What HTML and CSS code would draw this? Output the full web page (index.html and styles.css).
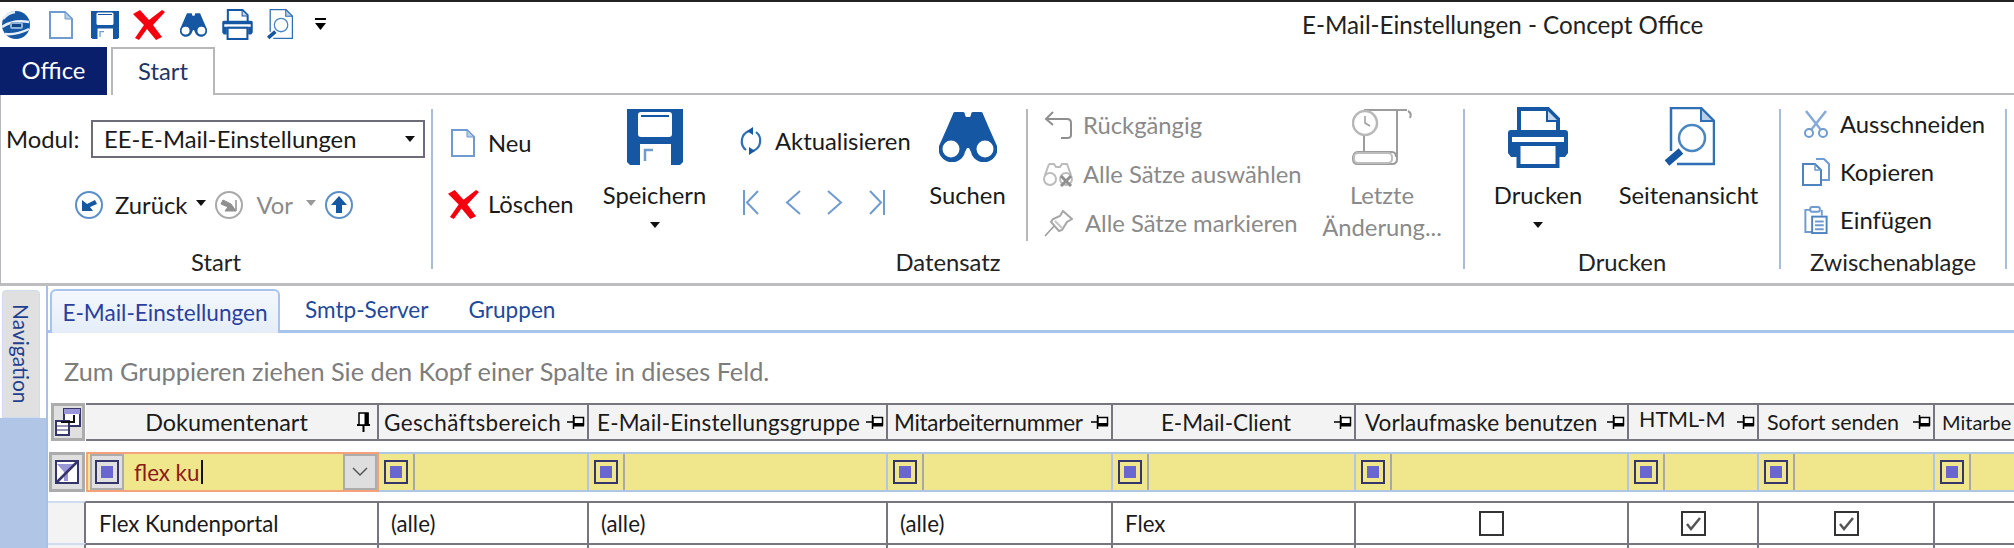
FILE: index.html
```html
<!DOCTYPE html>
<html lang="de">
<head>
<meta charset="utf-8">
<title>E-Mail-Einstellungen - Concept Office</title>
<link rel="stylesheet" href="styles.css">
</head>
<body>
<svg class="defs" width="0" height="0">
  <symbol id="doc" viewBox="0 0 24 28"><path d="M1 1H16L23 8V27H1Z" fill="#fff" stroke="#6f9bcf" stroke-width="2"/><path d="M16 1V8H23Z" fill="#b9cfe8" stroke="#6f9bcf"/></symbol>
  <symbol id="save" viewBox="0 0 56 56"><path d="M0 0H56V53L53 56H3L0 53Z" fill="#1657a3"/><rect x="11" y="3" width="34" height="25" rx="3" fill="#fff"/><rect x="14" y="6" width="28" height="2" fill="#1657a3"/><rect x="13" y="35" width="31" height="21" fill="#fff"/><path d="M18 52V41H26" fill="none" stroke="#6f9bcf" stroke-width="2.5"/></symbol>
  <symbol id="cross" viewBox="0 0 32 30"><path d="M0 4L7 0L16 10L29 0L32 2L20 15L29 27L23 30L14 19L6 30L2 28L11 15Z" fill="#f5000f"/></symbol>
  <symbol id="binoc" viewBox="0 0 58 50"><path d="M14 2Q14 0 16 0H24Q26 0 26 3L27 5H31L32 3Q32 0 34 0H42Q44 0 44 2L50 16L58 34A13 13 0 0 1 32 40L30 36H28L26 40A13 13 0 0 1 0 34L8 16Z" fill="#1657a3"/><circle cx="12" cy="37" r="8.500" fill="#fff"/><circle cx="46" cy="37" r="8.500" fill="#fff"/></symbol>
  <symbol id="printer" viewBox="0 0 60 61"><path d="M11 25V2H40L50 12V25" fill="#fff" stroke="#1657a3" stroke-width="4"/><path d="M39 3V14H50" fill="#c5d7ec" stroke="#1657a3" stroke-width="2"/><path d="M3 23H57Q60 23 60 26V46L57 50H51V36H9V50H3L0 46V26Q0 23 3 23Z" fill="#1657a3"/><rect x="4" y="30" width="52" height="5" fill="#fff"/><rect x="10.500" y="37" width="39" height="22" fill="#fff" stroke="#1657a3" stroke-width="4"/></symbol>
  <symbol id="preview" viewBox="0 0 52 60"><path d="M8 44V1H38L51 14V57H14" fill="#fff" stroke="#2f6fb5" stroke-width="2.500"/><path d="M38 1V14H51Z" fill="#b9cfe8" stroke="#2f6fb5" stroke-width="2"/><circle cx="29" cy="31" r="13" fill="#fff" stroke="#4a86c2" stroke-width="2.500"/><path d="M4 56L18 44" stroke="#1657a3" stroke-width="7"/></symbol>
  <symbol id="pin-side" viewBox="0 0 18 14"><path d="M0 7H6M6.500 0V14" stroke="#000" stroke-width="1.500" fill="none"/><path d="M7 2.500H16.500V10H7Z" fill="#fff" stroke="#000" stroke-width="1.500"/><path d="M7 8H17V11.500H7Z" fill="#000"/></symbol>
  <symbol id="pin-down" viewBox="0 0 15 20"><path d="M7.500 13V20M1 13H14" stroke="#000" stroke-width="2" fill="none"/><path d="M3 1H12V13H3Z" fill="#fff" stroke="#000" stroke-width="1.500"/><path d="M8.500 1H12.500V13H8.500Z" fill="#000"/></symbol>
  <symbol id="opsq" viewBox="0 0 24 24"><rect x="1" y="1" width="22" height="22" fill="none" stroke="#35356b" stroke-width="2"/><rect x="6" y="6" width="12" height="12" fill="#6a66cf"/></symbol>
  <symbol id="check" viewBox="0 0 25 25"><rect x="1" y="1" width="23" height="23" fill="#fff" stroke="#333" stroke-width="2"/><path d="M6 13L10 18L19 7" fill="none" stroke="#555" stroke-width="2.500"/></symbol>
  <symbol id="box" viewBox="0 0 25 25"><rect x="1" y="1" width="23" height="23" fill="#fff" stroke="#333" stroke-width="2"/></symbol>
</svg>

<header class="titlebar">
  <div class="qat">
    <svg class="qi logo" viewBox="0 0 28 28"><circle cx="14" cy="14" r="14" fill="#1657a3"/><path d="M1 8Q6 2 13 1M0 16Q11 8 27 11M3 23Q15 24 27 18" fill="none" stroke="#e6eff8" stroke-width="2.500"/><rect x="8" y="11" width="13" height="7" rx="2" fill="#8fb2d9"/><rect x="10" y="13" width="9" height="3" fill="#0f4586"/></svg>
    <svg class="qi q-doc"><use href="#doc"/></svg>
    <svg class="qi q-save"><use href="#save"/></svg>
    <svg class="qi q-cross"><use href="#cross"/></svg>
    <svg class="qi q-binoc"><use href="#binoc"/></svg>
    <svg class="qi q-printer"><use href="#printer"/></svg>
    <svg class="qi q-preview"><use href="#preview"/></svg>
    <svg class="qi q-more" viewBox="0 0 11 13"><rect width="11" height="2"/><path d="M0 5H11L5.500 12Z"/></svg>
  </div>
  <div class="title">E-Mail-Einstellungen - Concept Office</div>
</header>

<nav class="tabs">
  <div class="tab-office">Office</div>
  <div class="tab-start">Start</div>
  <div class="tabs-rest"></div>
</nav>

<section class="ribbon">
  <div class="group g-start">
    <div class="modul">
      <span class="modul-label">Modul:</span>
      <div class="combo"><span>EE-E-Mail-Einstellungen</span><i class="caret"></i></div>
    </div>
    <div class="histnav">
      <svg class="circ" viewBox="0 0 28 28"><circle cx="14" cy="14" r="13" fill="#fff" stroke="#5a8fc7" stroke-width="2"/><path d="M7 9V20H18L15 16L22 13L20 9L12 13Z" fill="#1657a3"/></svg>
      <span class="hist-t">Zurück</span><i class="caret hist-c"></i>
      <svg class="circ" viewBox="0 0 28 28"><circle cx="14" cy="14" r="13" fill="#fff" stroke="#a9a9a9" stroke-width="2"/><path d="M21 20V9L21 20H10L13 16L6 13L8 9L16 13Z" fill="#8f8f8f" stroke="#8f8f8f"/></svg>
      <span class="hist-t off vor">Vor</span><i class="caret off hist-c"></i>
      <svg class="circ" viewBox="0 0 28 28"><circle cx="14" cy="14" r="13" fill="#fff" stroke="#5a8fc7" stroke-width="2"/><path d="M14 5L22 14H17V22H11V14H6Z" fill="#1657a3"/></svg>
    </div>
    <div class="group-label">Start</div>
  </div>

  <div class="group g-data">
    <div class="group-body">
      <div class="stack s-neu">
        <div class="item"><span class="ic"><svg class="i-doc"><use href="#doc"/></svg></span><span>Neu</span></div>
        <div class="item"><span class="ic"><svg class="i-cross"><use href="#cross"/></svg></span><span>Löschen</span></div>
      </div>
      <div class="large l-save">
        <div class="large-ic"><svg class="i-save"><use href="#save"/></svg></div>
        <div class="large-t">Speichern</div>
        <i class="caret large-c"></i>
      </div>
      <div class="s-upd">
        <div class="item"><span class="ic-upd"><svg viewBox="0 0 24 32"><path d="M10 6A11 11 0 0 0 7 25M14 26A11 11 0 0 0 17 7" fill="none" stroke="#2f6fb5" stroke-width="2.200"/><path d="M14 2V10L8 6ZM10 22V30L16 26Z" fill="#1657a3"/></svg></span><span>Aktualisieren</span></div>
        <div class="recnav">
          <svg viewBox="0 0 16 25"><path d="M1 0V25M15 1L4 12.500L15 24" fill="none" stroke="#6f9bcf" stroke-width="2"/></svg>
          <svg viewBox="0 0 16 25"><path d="M15 1L2 12.500L15 24" fill="none" stroke="#6f9bcf" stroke-width="2"/></svg>
          <svg viewBox="0 0 16 25"><path d="M1 1L14 12.500L1 24" fill="none" stroke="#6f9bcf" stroke-width="2"/></svg>
          <svg viewBox="0 0 16 25"><path d="M15 0V25M1 1L12 12.500L1 24" fill="none" stroke="#6f9bcf" stroke-width="2"/></svg>
        </div>
      </div>
      <div class="large l-find">
        <div class="large-ic"><svg class="i-binoc"><use href="#binoc"/></svg></div>
        <div class="large-t">Suchen</div>
      </div>
      <div class="inner-sep"></div>
      <div class="stack s-dis off">
        <div class="item"><span class="ic"><svg class="i-undo" viewBox="0 0 28 28"><path d="M9 1L2 8L9 14M2 8H23Q27 8 27 12V24Q27 27 23 27H17" fill="none" stroke="#8f8f8f" stroke-width="2"/></svg></span><span>Rückgängig</span></div>
        <div class="item"><span class="ic"><svg class="i-all" viewBox="0 0 30 25"><path d="M6 2H11L13 5H17L19 2H24L28 13M6 2L2 13" fill="none" stroke="#bcbcbc" stroke-width="2"/><circle cx="7" cy="17" r="6" fill="#fff" stroke="#bcbcbc" stroke-width="2"/><circle cx="23" cy="17" r="6" fill="#fff" stroke="#bcbcbc" stroke-width="2"/><path d="M18 14L28 24M28 14L18 24" stroke="#8f8f8f" stroke-width="3"/></svg></span><span>Alle Sätze auswählen</span></div>
        <div class="item"><span class="ic"><svg class="i-pin" viewBox="0 0 29 27"><path d="M1 26L11 15" stroke="#9a9a9a" stroke-width="1.500"/><path d="M19 1L28 9L23 12L18 20L15 21L7 12L9 9L16 6Z" fill="#fff" stroke="#a6a6a6" stroke-width="2"/><path d="M11 11L18 18" stroke="#c5c5c5" stroke-width="2"/></svg></span><span class="mark-t">Alle Sätze markieren</span></div>
      </div>
      <div class="large l-last off">
        <div class="large-ic"><svg class="i-scroll" viewBox="0 0 60 56"><path d="M12 1H55M56 2Q60 4 58 9M45 2V50Q45 55 40 55H6Q1 55 1 50Q1 43 6 43H40Q44 43 44 48M12 26V43" fill="none" stroke="#9c9c9c" stroke-width="2"/><rect x="2" y="44" width="38" height="10" rx="4" fill="#fff" stroke="#bdbdbd" stroke-width="2"/><circle cx="13" cy="14" r="12" fill="#fff" stroke="#b8b8b8" stroke-width="2.500"/><path d="M13 7V14L18 17" fill="none" stroke="#9c9c9c" stroke-width="1.500"/></svg></div>
        <div class="large-t">Letzte<br>Änderung...</div>
      </div>
    </div>
    <div class="group-label">Datensatz</div>
  </div>

  <div class="group g-print">
    <div class="group-body">
      <div class="large l-print">
        <div class="large-ic"><svg class="i-printer"><use href="#printer"/></svg></div>
        <div class="large-t">Drucken</div>
        <i class="caret large-c"></i>
      </div>
      <div class="large l-prev">
        <div class="large-ic"><svg class="i-preview"><use href="#preview"/></svg></div>
        <div class="large-t">Seitenansicht</div>
      </div>
    </div>
    <div class="group-label">Drucken</div>
  </div>

  <div class="group g-clip">
    <div class="group-body">
      <div class="stack s-clip">
        <div class="item"><span class="ic"><svg class="i-sc" viewBox="0 0 26 28"><path d="M3 1L18 20M23 1L8 20" fill="none" stroke="#86abd8" stroke-width="2.500"/><circle cx="6" cy="23" r="4" fill="none" stroke="#6f9bcf" stroke-width="2"/><circle cx="20" cy="23" r="4" fill="none" stroke="#6f9bcf" stroke-width="2"/></svg></span><span>Ausschneiden</span></div>
        <div class="item"><span class="ic"><svg class="i-sc" viewBox="0 0 28 28"><path d="M14 1H22L27 6V22H20" fill="#fff" stroke="#6f9bcf" stroke-width="2"/><path d="M1 6H13L19 12V27H1Z" fill="#fff" stroke="#4f83bf" stroke-width="2"/><path d="M13 6V12H19" fill="none" stroke="#6f9bcf" stroke-width="1.500"/></svg></span><span>Kopieren</span></div>
        <div class="item"><span class="ic"><svg class="i-sc" viewBox="0 0 24 29"><path d="M8 4H1V27H8" fill="none" stroke="#6f9bcf" stroke-width="2"/><path d="M18 4V10" stroke="#6f9bcf" stroke-width="2"/><rect x="6" y="1" width="10" height="5" rx="2" fill="#fff" stroke="#6f9bcf" stroke-width="2"/><rect x="8" y="11" width="15" height="17" fill="#fff" stroke="#4f83bf" stroke-width="2"/><path d="M11 16H20M11 20H20M11 24H20" stroke="#6f9bcf" stroke-width="2"/></svg></span><span>Einfügen</span></div>
      </div>
    </div>
    <div class="group-label">Zwischenablage</div>
  </div>
</section>

<main class="main">
  <aside class="side">
    <div class="side-top"><div class="nav-tab"><span>Navigation</span></div></div>
    <div class="side-fill"></div>
  </aside>
  <div class="content">
    <div class="page-tabs">
      <div class="ptab active">E-Mail-Einstellungen</div>
      <div class="ptab p-smtp">Smtp-Server</div>
      <div class="ptab p-grp">Gruppen</div>
    </div>
    <div class="hint">Zum Gruppieren ziehen Sie den Kopf einer Spalte in dieses Feld.</div>

    <div class="row head">
      <div class="corner"><svg viewBox="0 0 26 28"><path d="M9 1H25V18H9Z" fill="#fff" stroke="#35356b" stroke-width="2"/><rect x="9" y="1" width="16" height="5" fill="#9a97d8"/><path d="M1 13H14V27H1Z" fill="#fff" stroke="#35356b" stroke-width="2"/><path d="M1 18H14M1 22H14" stroke="#35356b"/><path d="M6 14H19V7" fill="none" stroke="#111" stroke-width="2"/></svg></div>
      <div class="hc center"><span class="hc-t h-dok">Dokumentenart</span><svg class="pin-d"><use href="#pin-down"/></svg></div>
      <div class="hc"><span class="hc-t h-gb">Geschäftsbereich</span><svg class="pin-s"><use href="#pin-side"/></svg></div>
      <div class="hc"><span class="hc-t h-eg">E-Mail-Einstellungsgruppe</span><svg class="pin-s"><use href="#pin-side"/></svg></div>
      <div class="hc"><span class="hc-t h-mn">Mitarbeiternummer</span><svg class="pin-s"><use href="#pin-side"/></svg></div>
      <div class="hc center"><span class="hc-t h-ec">E-Mail-Client</span><svg class="pin-s"><use href="#pin-side"/></svg></div>
      <div class="hc"><span class="hc-t h-vm">Vorlaufmaske benutzen</span><svg class="pin-s"><use href="#pin-side"/></svg></div>
      <div class="hc"><span class="hc-t raised">HTML-M</span><svg class="pin-s"><use href="#pin-side"/></svg></div>
      <div class="hc"><span class="hc-t h-so">Sofort senden</span><svg class="pin-s"><use href="#pin-side"/></svg></div>
      <div class="hc last"><span class="hc-t">Mitarbe</span></div>
    </div>

    <div class="row filter">
      <div class="corner fcorner"><svg viewBox="0 0 24 24"><rect x="1" y="1" width="22" height="22" fill="#fff" stroke="#35356b" stroke-width="2"/><path d="M2 4H20L13 12V21H9V12Z" fill="#9a97d8"/><path d="M2 22L22 2" stroke="#35356b" stroke-width="2.500"/></svg></div>
      <div class="fc active-f"><span class="op op-on"><svg><use href="#opsq"/></svg></span><span class="ftext">flex ku</span><span class="cursor"></span><span class="drop"><svg viewBox="0 0 16 10"><path d="M1 1L8 8L15 1" fill="none" stroke="#555" stroke-width="1.500"/></svg></span></div>
      <div class="fc"><span class="op"><svg><use href="#opsq"/></svg></span></div>
      <div class="fc"><span class="op"><svg><use href="#opsq"/></svg></span></div>
      <div class="fc"><span class="op"><svg><use href="#opsq"/></svg></span></div>
      <div class="fc"><span class="op"><svg><use href="#opsq"/></svg></span></div>
      <div class="fc"><span class="op"><svg><use href="#opsq"/></svg></span></div>
      <div class="fc"><span class="op"><svg><use href="#opsq"/></svg></span></div>
      <div class="fc"><span class="op"><svg><use href="#opsq"/></svg></span></div>
      <div class="fc"><span class="op"><svg><use href="#opsq"/></svg></span></div>
    </div>

    <div class="row data">
      <div class="rowhead"></div>
      <div class="dc d-first">Flex Kundenportal</div>
      <div class="dc">(alle)</div>
      <div class="dc">(alle)</div>
      <div class="dc">(alle)</div>
      <div class="dc">Flex</div>
      <div class="dc chk"><svg><use href="#box"/></svg></div>
      <div class="dc chk"><svg><use href="#check"/></svg></div>
      <div class="dc chk"><svg><use href="#check"/></svg></div>
      <div class="dc"></div>
    </div>
    <div class="row data next">
      <div class="rowhead"></div>
      <div class="dc"></div><div class="dc"></div><div class="dc"></div><div class="dc"></div><div class="dc"></div><div class="dc"></div><div class="dc"></div><div class="dc"></div><div class="dc"></div>
    </div>
  </div>
</main>
</body>
</html>
```

FILE: styles.css
```css
* { box-sizing: border-box; }
html, body { margin: 0; padding: 0; }
body {
  width: 2014px;
  height: 548px;
  overflow: hidden;
  background: #fff;
  color: #1a1a1a;
  font-family: Lato, "Open Sans", sans-serif;
  font-size: 23.800px;
  display: flex;
  flex-direction: column;
}
svg { display: block; flex: none; }
.defs { position: absolute; }
i { display: block; }

/* title bar */
.titlebar {
  height: 47px;
  border-top: 2px solid #222;
  display: flex;
  align-items: center;
  position: relative;
  flex: none;
}
.qat { display: flex; align-items: center; padding-left: 2px; height: 45px; }
.qi { margin-right: 0; }
.logo { width: 28px; height: 28px; }
.q-doc { width: 24px; height: 28px; margin-left: 19px; }
.q-save { width: 28px; height: 28px; margin-left: 18px; }
.q-cross { width: 32px; height: 30px; margin-left: 14px; }
.q-binoc { width: 27px; height: 26px; margin-left: 15px; }
.q-printer { width: 31px; height: 31px; margin-left: 15px; }
.q-preview { width: 27px; height: 31px; margin-left: 13px; }
.q-more { width: 11px; height: 13px; margin-left: 22px; }
.title {
  margin-left: 976px;
  color: #222;
  font-size: 24.200px;
  white-space: nowrap;
}

/* ribbon tabs */
.tabs { display: flex; height: 48px; flex: none; }
.tab-office {
  width: 107px;
  background: #0a1f6b;
  color: #fff;
  display: flex;
  align-items: center;
  justify-content: center;
  padding-bottom: 2px;
}
.tab-start {
  width: 104px;
  margin-left: 4px;
  border: 2px solid #b8b8bc;
  border-bottom: 0;
  display: flex;
  align-items: center;
  justify-content: center;
  color: #1f3566;
  padding-bottom: 2px;
}
.tabs-rest { flex: 1; border-bottom: 2px solid #b8b8bc; }

/* ribbon */
.ribbon {
  display: flex;
  height: 191px;
  flex: none;
  border-left: 1px solid #b8b8bc;
  border-bottom: 3px solid #bdbdc0;
  padding-top: 14px;
}
.group {
  position: relative;
  height: 160px;
  border-right: 2px solid #a9bdd9;
  display: flex;
  flex-direction: column;
}
.g-start { width: 432px; }
.g-data { width: 1032px; }
.g-print { width: 316px; }
.g-clip { width: 226px; }
.group-body { display: flex; flex: 1; min-height: 0; }
.group-label {
  height: 30px;
  line-height: 30px;
  text-align: center;
  flex: none;
  margin-top: auto;
  margin-bottom: -8px;
  color: #222;
}

.modul { display: flex; align-items: center; padding: 11px 0 0 5px; }
.modul-label { width: 85px; }
.combo {
  width: 334px;
  height: 38px;
  border: 2px solid #6d6d78;
  display: flex;
  align-items: center;
  justify-content: space-between;
  padding: 0 8px 0 11px;
}
.caret {
  width: 0; height: 0;
  border-left: 5px solid transparent;
  border-right: 5px solid transparent;
  border-top: 6px solid #111;
}
.caret.off { border-top-color: #999; }
.histnav { display: flex; align-items: center; padding: 33px 0 0 74px; }
.circ { width: 28px; height: 28px; }
.hist-t { margin-left: 12px; }
.hist-c { margin: 0 9px 4px 9px; }
.off, .off .large-t { color: #8a8a8a; }
.hist-t.vor { margin-left: 13px; }
.vor + .hist-c { margin: 0 9px 4px 13px; }

.s-neu { padding: 14px 0 0 14px; width: 170px; row-gap: 21px; grid-auto-rows: 40px; }
.stack { display: grid; align-content: start; }
.item { display: flex; align-items: center; gap: 9px; white-space: nowrap; }
.ic { width: 32px; display: flex; justify-content: center; }
.i-doc { width: 24px; height: 28px; }
.i-cross { width: 31px; height: 31px; }
.large { display: flex; flex-direction: column; align-items: center; white-space: nowrap; }
.large-ic { height: 56px; margin-bottom: 14px; display: flex; align-items: center; justify-content: center; }
.large-t { line-height: 32px; text-align: center; }
.large-c { margin-top: 11px; }
.l-save { width: 103px; }
.i-save { width: 56px; height: 56px; }
.s-upd { margin-left: 33px; width: 171px; padding-top: 14px; }
.s-upd .item { height: 36px; gap: 12px; }
.ic-upd svg { width: 24px; height: 32px; }
.recnav { display: flex; gap: 26px; padding: 31px 0 0 4px; }
.recnav svg { width: 16px; height: 25px; }
.l-find { width: 77px; margin-left: 19px; }
.i-binoc { width: 58px; height: 50px; }
.inner-sep { width: 2px; height: 132px; background: #b8b8bc; margin-left: 20px; }
.s-dis { margin-left: 14px; width: 275px; padding-top: 2px; row-gap: 21px; grid-auto-rows: 28px; }
.i-undo { width: 28px; height: 28px; }
.i-all { width: 30px; height: 25px; }
.i-pin { width: 29px; height: 27px; }
.mark-t { margin-left: 2px; }
.l-last { width: 130px; }
.i-scroll { width: 60px; height: 56px; }
.l-print { width: 86px; margin-left: 30px; }
.i-printer { width: 60px; height: 61px; }
.l-prev { width: 141px; margin-left: 37px; }
.i-preview { width: 52px; height: 60px; }
.s-clip { margin-left: 20px; padding-top: 1px; row-gap: 20px; grid-auto-rows: 28px; }
.s-clip .ic { width: 30px; }
.i-sc { width: 28px; height: 28px; }

/* main */
.main { flex: 1; display: flex; min-height: 0; }
.side { width: 46px; display: flex; flex-direction: column; flex: none; }
.side-top { height: 132px; padding: 4px 6px 0 2px; flex: none; }
.nav-tab {
  height: 128px;
  background: #e0e0e0;
  border: 1px solid #cfdcef;
  border-radius: 4px 4px 0 0;
  display: flex;
  align-items: center;
  justify-content: center;
}
.nav-tab span {
  writing-mode: vertical-rl;
  font-size: 21px;
  color: #1f3f8f;
}
.side-fill { flex: 1; background: #b1c6e6; }
.content { flex: 1; min-width: 0; border-left: 2px solid #a6c0e6; overflow: hidden; }

.page-tabs {
  height: 47px;
  display: flex;
  align-items: flex-end;
  padding-left: 2px;
  border-bottom: 3px solid #a6c4ec;
  color: #1f4a9a;
  font-size: 22.600px;
  white-space: nowrap;
}
.ptab { height: 42px; display: flex; align-items: center; }
.ptab.active {
  width: 230px;
  height: 44px;
  justify-content: center;
  margin-bottom: -3px;
  background: linear-gradient(#f4f8fd, #e4edf9);
  border: 2px solid #a6c4ec;
  border-bottom: 0;
  border-radius: 6px 6px 0 0;
  color: #2b3f9f;
}
.p-smtp { margin-left: 25px; }
.p-grp { margin-left: 40px; }
.hint {
  height: 70px;
  padding: 6px 0 0 16px;
  display: flex;
  align-items: center;
  color: #7d7d7d;
  font-size: 25.300px;
  white-space: nowrap;
}

/* grid */
.row {
  display: grid;
  grid-template-columns: 38px 293px 210px 299px 225px 243px 273px 130px 176px minmax(0, 1fr);
  font-size: 22.300px;
}
.corner {
  background: #e0e0e0;
  border: 3px solid #acacac;
  display: flex;
  align-items: center;
  justify-content: center;
  margin-left: 3px;
  margin-right: 1px;
}
.corner svg { width: 26px; height: 28px; }
.head { height: 38px; margin-bottom: 11px; }
.hc {
  background: #f3f3f3;
  border-top: 2px solid #77757f;
  border-bottom: 2px solid #77757f;
  border-right: 2px solid #77757f;
  display: flex;
  align-items: center;
  justify-content: space-between;
  padding: 0 2px 0 5px;
  white-space: nowrap;
  overflow: hidden;
}
.hc.center { position: relative; }
.hc.center .hc-t { flex: 1; text-align: center; }
.hc.last { border-right: 0; padding-left: 7px; padding-right: 0; font-size: 20px; }
.h-dok { font-size: 23.400px; padding-left: 6px; }
.h-ec { font-size: 22.500px; }
.h-gb { font-size: 22.500px; letter-spacing: .4px; }
.h-eg { font-size: 22.500px; letter-spacing: .15px; padding-left: 3px; }
.h-mn { font-size: 22.500px; letter-spacing: -.3px; padding-left: 1px; }
.h-vm { font-size: 22.600px; padding-left: 4px; }
.h-so { font-size: 21.500px; padding-left: 3px; }
.raised { margin-top: -6px; font-size: 21.500px; padding-left: 5px; }
.pin-s { width: 18px; height: 14px; }
.pin-d { width: 15px; height: 20px; margin-right: 4px; }
.filter { height: 40px; margin-bottom: 9px; }
.fcorner { margin-left: 1px; }
.fcorner svg { width: 24px; height: 24px; }
.fc {
  background: #f0e68c;
  border-top: 2px solid #b1c6e6;
  border-bottom: 2px solid #b1c6e6;
  border-right: 2px solid #b1c6e6;
  display: flex;
  align-items: center;
  position: relative;
}
.fc:last-child { border-right: 0; }
.op {
  width: 36px;
  height: 100%;
  border-right: 2px solid #a8a8a8;
  display: flex;
  align-items: center;
  padding-left: 5px;
  flex: none;
}
.op svg { width: 24px; height: 24px; }
.active-f { border: 2px solid #f5a17a; }
.op-on {
  background: #e0e0e0;
  border: 2px solid #acacac;
  width: 34px;
  padding-left: 3px;
  margin-left: 2px;
  height: 36px;
}
.ftext { margin-left: 10px; color: #8b1a1a; }
.cursor { width: 2px; height: 24px; background: #111; margin-left: 2px; }
.drop {
  margin-left: auto;
  width: 34px;
  height: 36px;
  background: #dedede;
  border: 2px solid #acacac;
  display: flex;
  align-items: center;
  justify-content: center;
}
.drop svg { width: 16px; height: 10px; }
.data { height: 42px; }
.rowhead { background: #f3f3f3; border-top: 2px solid #cfdcef; border-right: 2px solid #77757f; }
.dc {
  border-top: 2px solid #77757f;
  border-right: 2px solid #77757f;
  display: flex;
  align-items: center;
  padding-left: 12px;
  white-space: nowrap;
}
.dc:last-child { border-right: 0; }
.d-first { padding-left: 13px; }
.chk { justify-content: center; padding: 0; }
.chk svg { width: 25px; height: 25px; }
.next { height: 20px; }
```
